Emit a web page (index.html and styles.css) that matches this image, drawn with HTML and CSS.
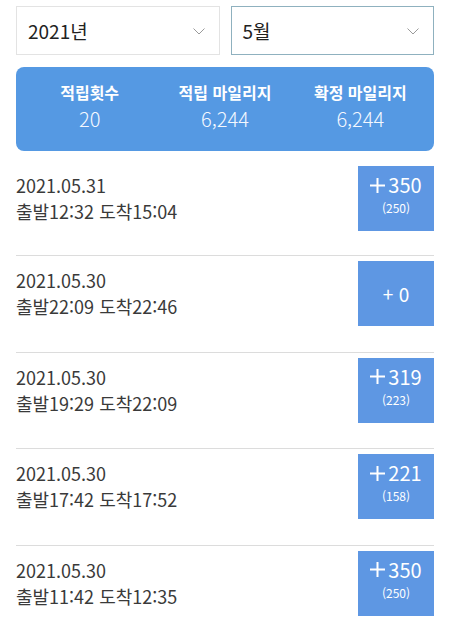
FILE: index.html
```html
<!DOCTYPE html>
<html lang="ko">
<head>
<meta charset="utf-8">
<link rel="stylesheet" href="styles.css">
</head>
<body>
<div class="page">
  <div class="selects">
    <div class="select">
      <span>2021년</span>
      <svg class="chev" width="12" height="7" viewBox="0 0 12 7"><path d="M0.5 0.5 L6 6 L11.5 0.5" fill="none" stroke="#9a9a9a" stroke-width="1"/></svg>
    </div>
    <div class="select active">
      <span>5월</span>
      <svg class="chev" width="12" height="7" viewBox="0 0 12 7"><path d="M0.5 0.5 L6 6 L11.5 0.5" fill="none" stroke="#9a9a9a" stroke-width="1"/></svg>
    </div>
  </div>
  <div class="summary">
    <div class="stat"><div class="label">적립횟수</div><div class="value">20</div></div>
    <div class="stat"><div class="label">적립 마일리지</div><div class="value">6,244</div></div>
    <div class="stat"><div class="label">확정 마일리지</div><div class="value">6,244</div></div>
  </div>
  <ul class="list">
    <li class="row">
      <div class="info"><div>2021.05.31</div><div>출발12:32 도착15:04</div></div>
      <div class="badge"><div class="amt"><svg class="plus" width="15" height="15" viewBox="0 0 15 15"><path d="M0 7.5 H15 M7.5 0 V15" stroke="#fff" stroke-width="2"/></svg><span>350</span></div><div class="sub">(250)</div></div>
    </li>
    <li class="row">
      <div class="info"><div>2021.05.30</div><div>출발22:09 도착22:46</div></div>
      <div class="badge single"><div class="amt small">+ 0</div></div>
    </li>
    <li class="row">
      <div class="info"><div>2021.05.30</div><div>출발19:29 도착22:09</div></div>
      <div class="badge"><div class="amt"><svg class="plus" width="15" height="15" viewBox="0 0 15 15"><path d="M0 7.5 H15 M7.5 0 V15" stroke="#fff" stroke-width="2"/></svg><span>319</span></div><div class="sub">(223)</div></div>
    </li>
    <li class="row">
      <div class="info"><div>2021.05.30</div><div>출발17:42 도착17:52</div></div>
      <div class="badge"><div class="amt"><svg class="plus" width="15" height="15" viewBox="0 0 15 15"><path d="M0 7.5 H15 M7.5 0 V15" stroke="#fff" stroke-width="2"/></svg><span>221</span></div><div class="sub">(158)</div></div>
    </li>
    <li class="row">
      <div class="info"><div>2021.05.30</div><div>출발11:42 도착12:35</div></div>
      <div class="badge"><div class="amt"><svg class="plus" width="15" height="15" viewBox="0 0 15 15"><path d="M0 7.5 H15 M7.5 0 V15" stroke="#fff" stroke-width="2"/></svg><span>350</span></div><div class="sub">(250)</div></div>
    </li>
  </ul>
</div>
</body>
</html>
```
FILE: styles.css
```css
* { box-sizing: border-box; }
html, body { margin: 0; padding: 0; background: #fff; }
body { font-family: "Noto Sans CJK KR", "Noto Sans", sans-serif; color: #333; }
.page { padding: 6px 16px 0 16px; width: 450px; }
.selects { display: flex; gap: 11px; }
.select {
  flex: 1; height: 49px; border: 1px solid #e3e3e3; background: #fff;
  display: flex; align-items: center; justify-content: space-between;
  padding: 0 14px 0 11px; font-size: 19px; color: #222;
}
.select.active { border-color: #8fb1bf; }
.chev { margin-top: 2px; }
.summary {
  margin-top: 12px; height: 84px; background: #5599e3; border-radius: 8px;
  display: flex; align-items: center; justify-content: space-around; padding: 0 6px 4px 6px;
  color: #fff; text-align: center;
}
.stat { width: 130px; }
.label { font-size: 16px; font-weight: bold; line-height: 23px; }
.value { font-size: 20px; line-height: 29px; font-weight: 300; color: #f4f8ff; }
.list { list-style: none; margin: 0; padding: 0; margin-top: 15px; }
.row {
  display: flex; justify-content: space-between; align-items: flex-start;
  border-bottom: 1px solid #dcdcdc; height: 96.6px; padding-top: 0;
}
.row:first-child { height: 90px; }
.row + .row { padding-top: 5px; }
.row:last-child { border-bottom: none; }
.info { font-size: 18px; line-height: 26px; color: #3a3a3a; padding-top: 6px; }
.badge {
  width: 76px; height: 65px; background: #5e97e3; color: #fff;
  display: flex; flex-direction: column; align-items: center; justify-content: flex-start;
  padding-top: 4px;
}
.badge.single { padding-top: 0; justify-content: center; }
.amt { font-size: 20px; line-height: 29px; display: flex; align-items: center; gap: 3px; }
.plus { margin-top: 1px; }
.amt.small { font-size: 19px; }
.sub { font-size: 12px; line-height: 17px; }
```
